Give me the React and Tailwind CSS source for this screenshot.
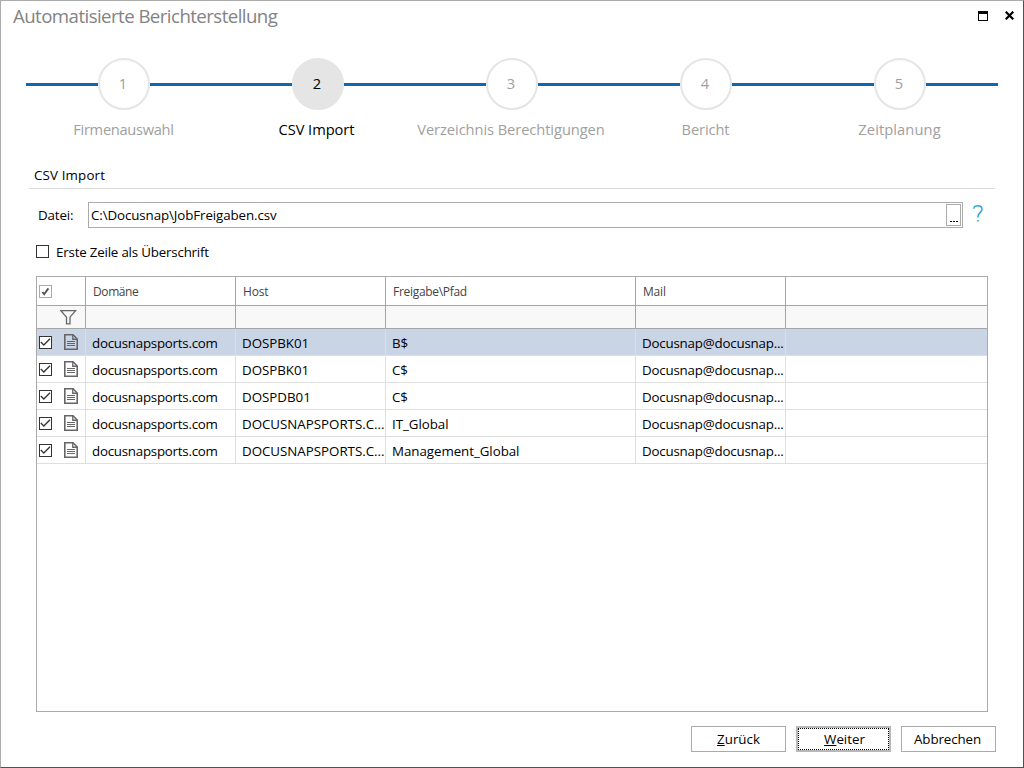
import React, { useState } from 'react';
import clsx from 'clsx';

const STEPS = [
  { label: 'Firmenauswahl', tracking: 'tracking-[-0.3px] pr-px' },
  { label: 'CSV Import', tracking: 'tracking-[-0.05px] pr-[3px]' },
  { label: 'Verzeichnis Berechtigungen', tracking: 'tracking-[-0.07px] pr-[2px]' },
  { label: 'Bericht', tracking: 'tracking-[-0.1px] pr-px' },
  { label: 'Zeitplanung', tracking: 'tracking-[0.1px] pr-px' }
];

const ROWS = [
  { domain: 'docusnapsports.com', host: 'DOSPBK01', path: 'B$' },
  { domain: 'docusnapsports.com', host: 'DOSPBK01', path: 'C$' },
  { domain: 'docusnapsports.com', host: 'DOSPDB01', path: 'C$' },
  { domain: 'docusnapsports.com', host: 'DOCUSNAPSPORTS.C...', path: 'IT_Global' },
  { domain: 'docusnapsports.com', host: 'DOCUSNAPSPORTS.C...', path: 'Management_Global' }
];

const GRID = 'grid grid-cols-[49px_150px_150px_250px_150px_1fr]';

function Checkbox({ checked, onClick }) {
  return (
    <svg width="13" height="13" viewBox="0 0 13 13" className="block shrink-0" onClick={onClick}>
      <rect x="0.5" y="0.5" width="12" height="12" fill="#fff" stroke="#333" />
      {checked && <path d="M1.8 6 4.8 9 11 2.8" fill="none" stroke="#333" strokeWidth="1.3" />}
    </svg>
  );
}

function HeaderCheckbox() {
  return (
    <svg width="13" height="13" viewBox="0 0 13 13" className="block shrink-0">
      <rect x="0.5" y="0.5" width="12" height="12" fill="#fff" stroke="#ababab" />
      <path d="M3.4 7 5.2 9.2 9.4 3.4" fill="none" stroke="#555" strokeWidth="1.9" />
    </svg>
  );
}

function DocIcon() {
  return (
    <svg width="14" height="16" viewBox="0 0 14 16" className="block shrink-0">
      <path d="M0.8 0.8H9L13.2 5V15.2H0.8Z" fill="none" stroke="#666" strokeWidth="1.6" />
      <path d="M8.75 1V5.25H13" fill="none" stroke="#666" strokeWidth="1.3" />
      <path d="M3 7.5H11M3 9.5H11M3 11.5H11" stroke="#666" strokeWidth="1" />
    </svg>
  );
}

function FunnelIcon() {
  return (
    <svg width="17" height="15" viewBox="0 0 17 15" className="block">
      <path d="M0.9 0.7H15.6L10 7.2V13.8H6.5V7.2Z" fill="none" stroke="#666" strokeWidth="1.3" />
    </svg>
  );
}

function Step({ number, label, tracking, active }) {
  return (
    <div className="flex w-[194px] flex-col items-center">
      <div className="flex w-full items-center">
        <div className="h-[3px] flex-1 bg-[#1166b3]" />
        <div
          className={clsx(
            'flex size-[52px] items-center justify-center rounded-full border-2 border-[#e5e5e5] pr-0.5 pb-0.5 text-[14.67px]',
            active ? 'bg-[#e5e5e5] text-black' : 'bg-white text-[#a0a0a0]'
          )}
        >
          {number}
        </div>
        <div className="h-[3px] flex-1 bg-[#1166b3]" />
      </div>
      <div
        className={clsx(
          'mt-[8px] text-[14.67px] leading-[22px] whitespace-nowrap',
          tracking,
          active ? 'text-black' : 'text-[#a0a0a0]'
        )}
      >
        {label}
      </div>
    </div>
  );
}

export default function App() {
  const [firstRowHeader, setFirstRowHeader] = useState(false);

  return (
    <div className="flex h-[768px] w-[1024px] flex-col overflow-hidden border border-t-[#ababab] border-r-[#2b579a] border-b-[#2b579a] border-l-[#ababab] bg-white font-['Open_Sans','Noto_Sans',sans-serif] text-[13.33px] text-black">
      {/* Title bar */}
      <div className="flex h-[57px] items-start justify-between pt-[2px] pr-[9px] pl-3">
        <h1 className="text-[18.67px] leading-[26px] tracking-[-0.56px] text-[#838383]">
          Automatisierte Berichterstellung
        </h1>
        <div className="flex gap-[17px] pt-[8px]">
          <svg width="10" height="10" viewBox="0 0 10 10" shapeRendering="crispEdges">
            <path d="M0 0H10V10H0ZM1 3V9H9V3Z" fill="#000" fillRule="evenodd" />
          </svg>
          <svg width="9" height="9" viewBox="0 0 9 9">
            <path d="M0.7 0.7 8.3 8.3M8.3 0.7 0.7 8.3" stroke="#000" strokeWidth="2.2" />
          </svg>
        </div>
      </div>

      {/* Wizard steps */}
      <div className="ml-[25px] flex w-[972px] justify-center">
        <div className="mt-[25px] h-[3px] w-px bg-[#1166b3]" />
        {STEPS.map((s, i) => (
          <Step key={s.label} number={i + 1} label={s.label} tracking={s.tracking} active={i === 1} />
        ))}
        <div className="mt-[25px] h-[3px] w-px bg-[#1166b3]" />
      </div>

      {/* Section heading */}
      <div className="mt-[22px] ml-7 h-[27px] w-[966px] border-b border-[#d9d9d9] pl-[5px] leading-[27px] tracking-[0.15px]">
        CSV Import
      </div>

      {/* File selection */}
      <div className="mt-[13px] ml-[37px] flex h-[26px] items-center">
        <label className="w-[50px] pt-[2px] tracking-[-0.15px]">Datei:</label>
        <div className="flex h-[26px] w-[875px] items-center justify-between border border-[#ababab] pr-px pl-[2px]">
          <span className="pt-[2px] tracking-[-0.1px]">C:\Docusnap\JobFreigaben.csv</span>
          <button className="flex h-[22px] w-[15px] items-end justify-center border border-[#ababab] pb-[3px]">
            <svg width="8" height="1" viewBox="0 0 8 1" shapeRendering="crispEdges">
              <path d="M0 0H2V1H0ZM3 0H5V1H3ZM6 0H8V1H6Z" fill="#000" />
            </svg>
          </button>
        </div>
        <svg width="10" height="17" viewBox="0 0 10 17" className="mb-1 ml-[10px]">
          <path
            d="M0.8 3.8C1 1.8 2.6 0.8 4.8 0.8C7.3 0.8 9 2 9 4.2C9 7.6 5 7.6 5 11.2V12.6"
            fill="none"
            stroke="#2ba3dc"
            strokeWidth="1.5"
          />
          <rect x="4.2" y="15" width="1.6" height="1.5" fill="#2ba3dc" />
        </svg>
      </div>

      {/* Header row option */}
      <div className="mt-[13px] ml-[35px] flex h-[22px] items-start gap-[7px]">
        <div className="pt-1">
          <Checkbox checked={firstRowHeader} onClick={() => setFirstRowHeader(!firstRowHeader)} />
        </div>
        <span className="leading-[23px] tracking-[-0.19px]">Erste Zeile als Überschrift</span>
      </div>

      {/* Shares table */}
      <div className="mt-[13px] ml-[35px] h-[436px] w-[952px] border border-[#ababab]">
        <div className={clsx(GRID, 'h-[29px] border-b border-[#a5a5a5] text-[12px] leading-[29px] text-[#444]')}>
          <div className="border-r border-[#a5a5a5] pt-[8px] pl-[2px]">
            <HeaderCheckbox />
          </div>
          <div className="border-r border-[#a5a5a5] pl-[7px] tracking-[-0.4px]">Domäne</div>
          <div className="border-r border-[#a5a5a5] pl-[7px] tracking-[-0.2px]">Host</div>
          <div className="border-r border-[#a5a5a5] pl-[7px] tracking-[-0.3px]">Freigabe\Pfad</div>
          <div className="border-r border-[#a5a5a5] pl-[7px] tracking-[-0.2px]">Mail</div>
          <div />
        </div>
        <div className={clsx(GRID, 'h-[23px] border-b border-[#a5a5a5] bg-[#f8f8f8]')}>
          <div className="border-r border-[#a5a5a5] pt-[4px] pl-[23px]">
            <FunnelIcon />
          </div>
          <div className="border-r border-[#a5a5a5]" />
          <div className="border-r border-[#a5a5a5]" />
          <div className="border-r border-[#a5a5a5]" />
          <div className="border-r border-[#a5a5a5]" />
          <div />
        </div>
        {ROWS.map((row, i) => (
          <div
            key={i}
            className={clsx(
              GRID,
              'h-[27px] border-b border-[#dfdfdf] leading-[28px] whitespace-nowrap',
              i === 0 && 'bg-[#c9d4e5]'
            )}
          >
            <div className="flex items-start gap-3 border-r border-[#dfdfdf] pt-[5px] pl-[2px]">
              <div className="pt-[2px]">
                <Checkbox checked />
              </div>
              <DocIcon />
            </div>
            <div className="h-[26px] border-r border-[#dfdfdf] pl-[6px] tracking-[-0.25px]">{row.domain}</div>
            <div className="h-[26px] border-r border-[#dfdfdf] pl-[6px] tracking-[-0.02px]">{row.host}</div>
            <div className="h-[26px] border-r border-[#dfdfdf] pl-[6px] tracking-[-0.05px]">{row.path}</div>
            <div className="h-[26px] border-r border-[#dfdfdf] pl-[6px] tracking-[-0.2px]">Docusnap@docusnap...</div>
            <div />
          </div>
        ))}
      </div>

      {/* Footer buttons */}
      <div className="mt-[14px] mr-[27px] flex justify-end gap-[10px]">
        <button className="h-[26px] w-[95px] border border-[#ababab] pt-[2px]">
          <span className="underline">Z</span>urück
        </button>
        <button className="h-[26px] w-[95px] border-2 border-[#b8b8b8]">
          <span className="flex h-full items-center justify-center border border-dotted border-black pt-[2px] pl-[2px]">
            <span className="underline">W</span>eiter
          </span>
        </button>
        <button className="h-[26px] w-[95px] border border-[#ababab] pt-[2px] pr-[2px] tracking-[-0.1px]">
          Abbrechen
        </button>
      </div>
    </div>
  );
}
